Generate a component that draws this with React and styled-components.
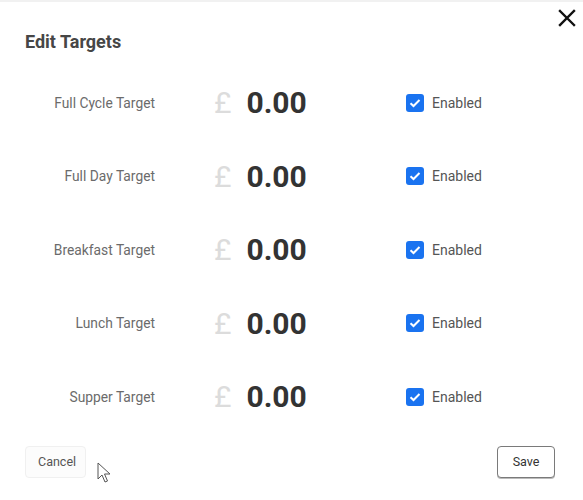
import React from 'react';
import styled, { createGlobalStyle } from 'styled-components';

const GlobalStyle = createGlobalStyle`
  html, body {
    margin: 0;
    padding: 0;
    background: #ffffff;
    font-family: Roboto, "Liberation Sans", sans-serif;
  }
`;

const targets = ['Full Cycle Target', 'Full Day Target', 'Breakfast Target', 'Lunch Target', 'Supper Target'];

export default function App() {
  return (
    <>
      <GlobalStyle />
      <Dialog>
        <TopEdge />
        <CloseButton aria-label="Close">
          <svg width="18" height="18" viewBox="0 0 18 18">
            <path d="M2 2 L16 16 M16 2 L2 16" stroke="#111" strokeWidth="2.4" strokeLinecap="square" />
          </svg>
        </CloseButton>
        <Title>Edit Targets</Title>
        <Rows>
          {targets.map(t => (
            <Row key={t}>
              <Label>{t}</Label>
              <Amount>
                <Currency>£</Currency>
                <Value>0.00</Value>
              </Amount>
              <Check>
                <Box>
                  <svg width="12" height="10" viewBox="0 0 12 10">
                    <path d="M1.5 5.2 L4.5 8 L10.5 2" fill="none" stroke="#fff" strokeWidth="2" />
                  </svg>
                </Box>
                <CheckText>Enabled</CheckText>
              </Check>
            </Row>
          ))}
        </Rows>
        <Footer>
          <CancelButton>Cancel</CancelButton>
          <SaveButton>Save</SaveButton>
          <Pointer width="16" height="22" viewBox="0 0 16 22">
            <path d="M1 1 L1 17 L5 13 L8 20 L10.5 19 L7.5 12 L13 12 Z" fill="#fff" stroke="#555" strokeWidth="1" strokeLinejoin="round" />
          </Pointer>
        </Footer>
      </Dialog>
    </>
  );
}

const Dialog = styled.div`
  position: relative;
  width: 583px;
  height: 500px;
  box-sizing: border-box;
  padding-top: 30px;
  background: #fff;
`;

const TopEdge = styled.div`
  position: absolute;
  top: 0;
  left: 0;
  right: 0;
  height: 2px;
  background: #f1f1f1;
`;

const CloseButton = styled.button`
  position: absolute;
  top: 8px;
  right: 6px;
  border: 0;
  background: none;
  padding: 0;
  width: 20px;
  height: 20px;
  display: flex;
  align-items: center;
  justify-content: center;
`;

const Title = styled.h2`
  margin: 0 0 12px 25px;
  font-size: 18px;
  line-height: 24px;
  font-weight: 700;
  color: #464646;
`;

const Rows = styled.div`
  display: flex;
  flex-direction: column;
`;

const Row = styled.div`
  display: grid;
  grid-template-columns: 214px 192px 1fr;
  align-items: center;
  height: 73.5px;
`;

const Label = styled.div`
  text-align: right;
  padding-right: 59px;
  font-size: 13.8px;
  color: #6b6b6b;
`;

const Amount = styled.div`
  display: flex;
  align-items: center;
  gap: 15px;
`;

const Currency = styled.span`
  font-size: 30px;
  color: #dcdcdc;
  font-weight: 400;
`;

const Value = styled.span`
  font-size: 30px;
  font-weight: 700;
  color: #333;
`;

const Check = styled.label`
  display: flex;
  align-items: center;
  gap: 8px;
`;

const Box = styled.span`
  width: 18px;
  height: 18px;
  border-radius: 3px;
  background: #1a73f0;
  display: flex;
  align-items: center;
  justify-content: center;
`;

const CheckText = styled.span`
  font-size: 14px;
  color: #555;
`;

const Footer = styled.div`
  position: relative;
  display: flex;
  justify-content: space-between;
  align-items: center;
  margin-top: 12px;
  padding: 0 28px 0 25px;
`;

const BaseButton = styled.button`
  font-family: Roboto, "Liberation Sans", sans-serif;
  font-size: 12.5px;
  height: 32px;
  padding: 0 12px;
  border-radius: 4px;
  cursor: pointer;
`;

const CancelButton = styled(BaseButton)`
  background: #fcfcfc;
  border: 1px solid #f0f0f0;
  color: #555;
  width: 61px;
`;

const SaveButton = styled(BaseButton)`
  background: #fff;
  border: 1px solid #7a7a7a;
  color: #333;
  width: 58px;
  box-shadow: 0 1px 0 #bbb;
`;

const Pointer = styled.svg`
  position: absolute;
  left: 97px;
  top: 16px;
`;
